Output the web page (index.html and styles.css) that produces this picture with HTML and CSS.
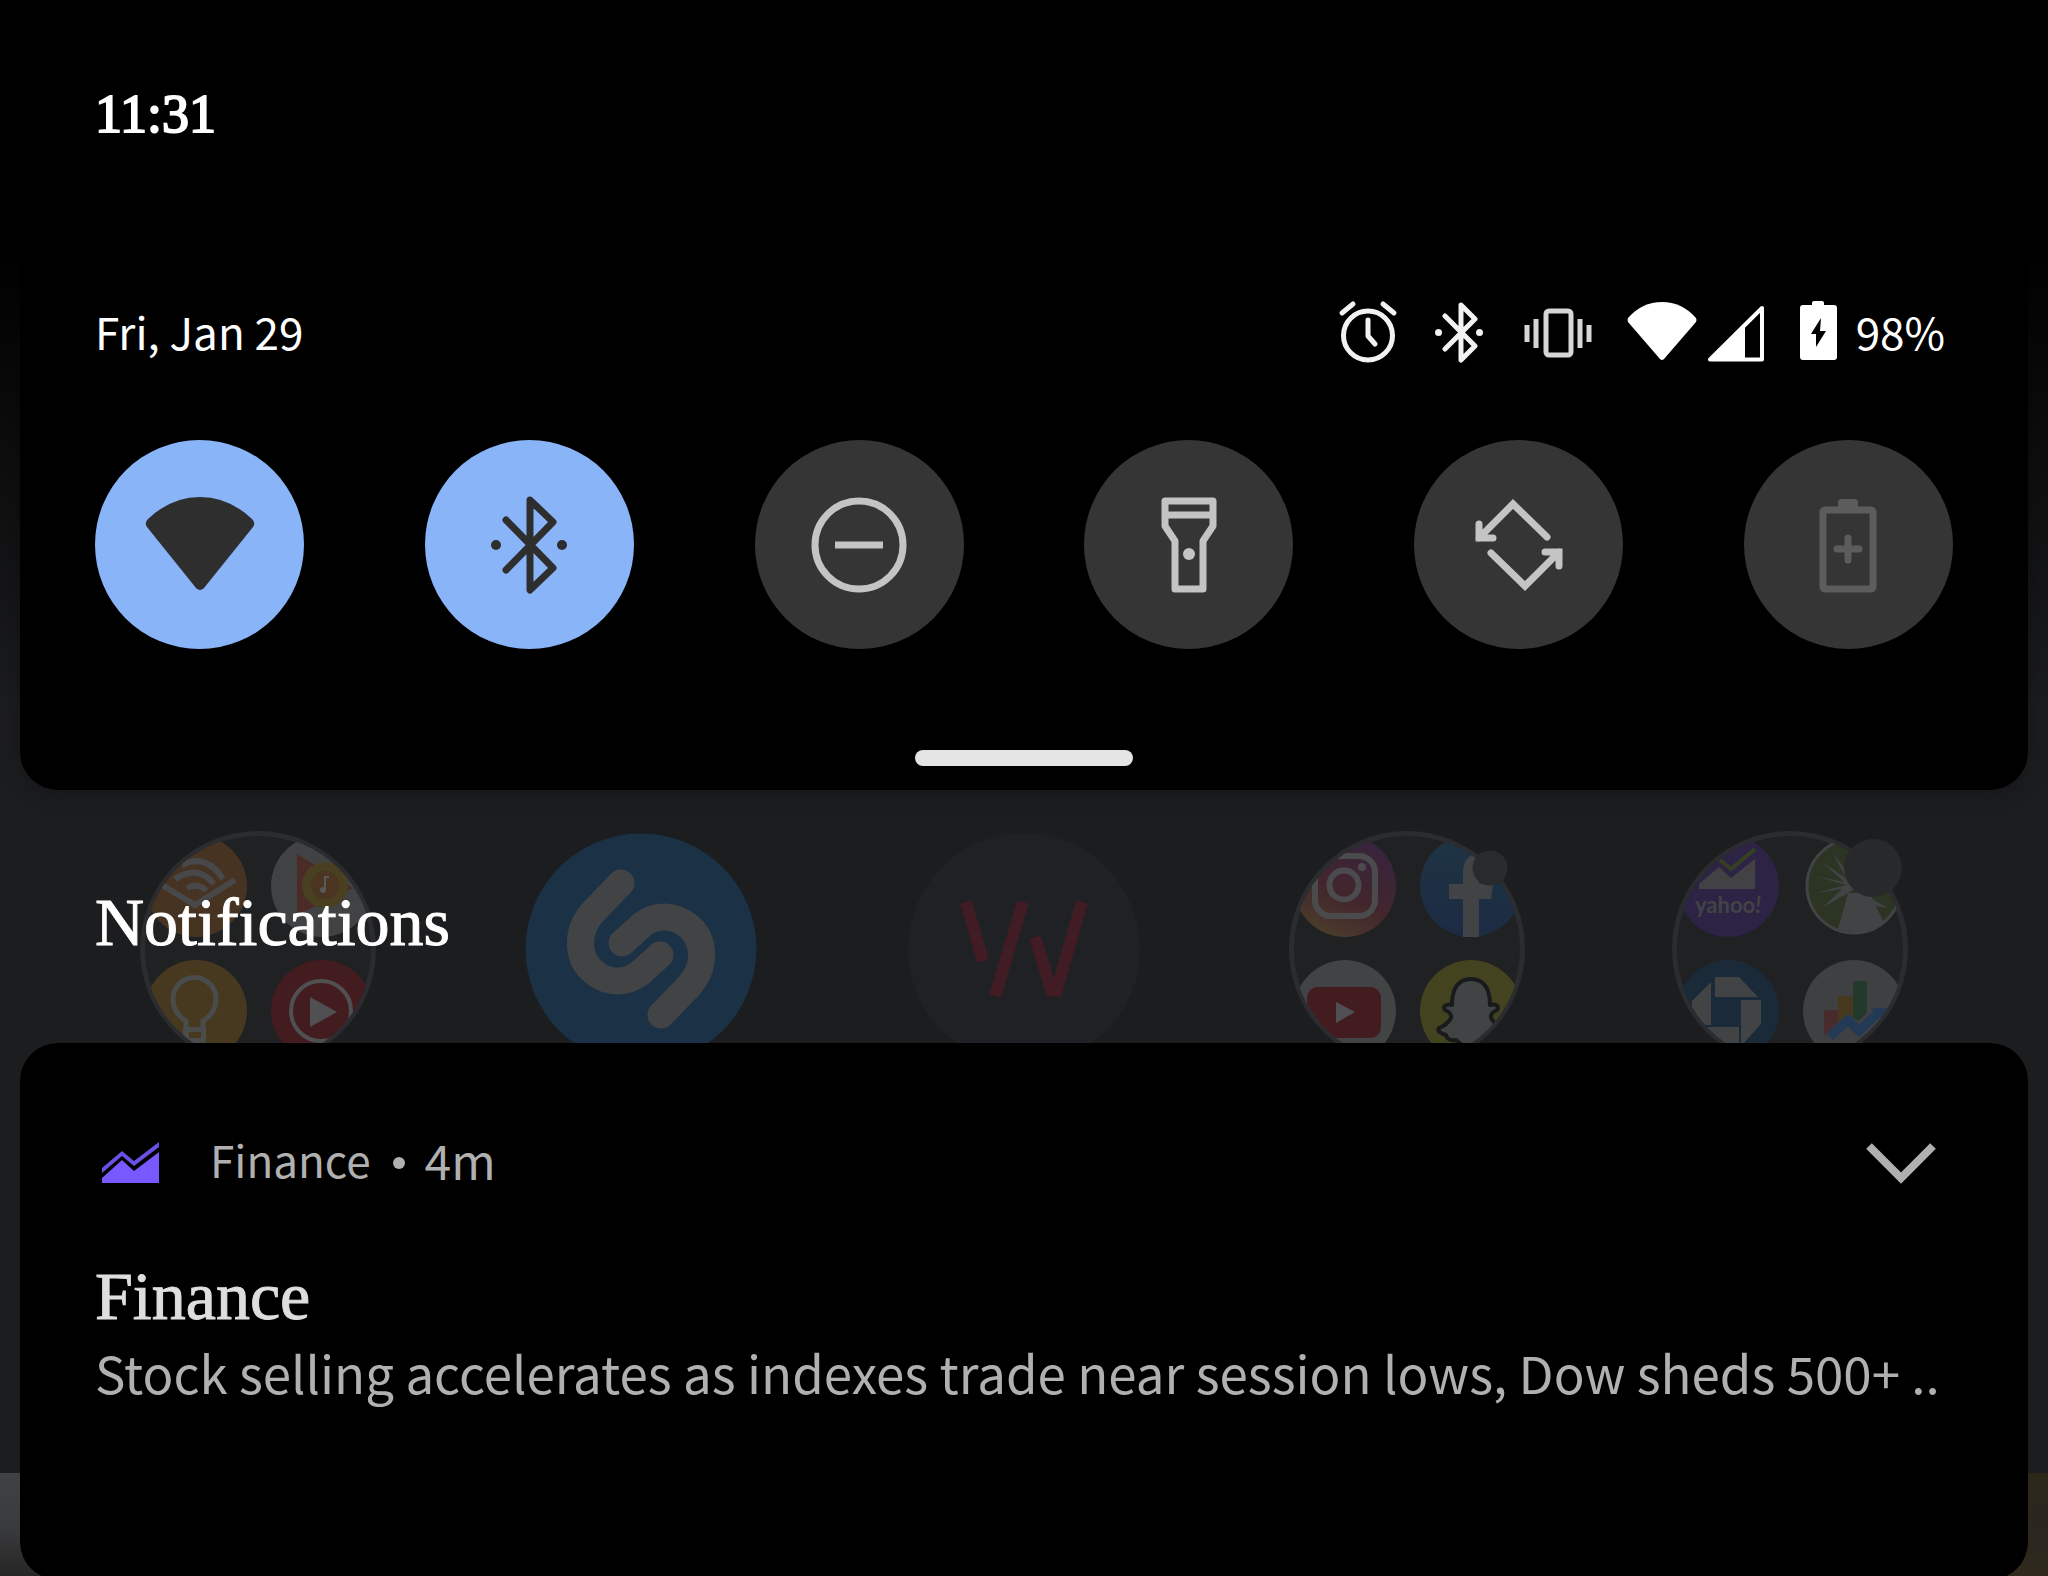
FILE: index.html
```html
<!DOCTYPE html>
<html lang="en">
<head>
    <meta charset="UTF-8">
    <meta name="viewport" content="width=device-width, initial-scale=1.0">
    <title>Notification shade</title>
    <link rel="stylesheet" href="styles.css">
</head>
<body>
    <!-- quick settings -->
    <header class="panel">
        <time class="clock">11:31</time>
        <div class="status">
            <span class="date">Fri, Jan 29</span>
            <div class="status-icons">
                <svg width="60" height="64" viewBox="0 0 60 64" fill="none" stroke="#f2f2f2" stroke-width="5" stroke-linecap="round" stroke-linejoin="round">
                    <circle cx="30" cy="36.500" r="24.500"/>
                    <path d="M4 14L15 5M45 5L56 14M30 21V37L37 45"/>
                </svg>
                <svg width="50" height="64" viewBox="0 0 50 64" fill="none" stroke="#f2f2f2" stroke-width="5" stroke-linejoin="round">
                    <path stroke-linecap="round" d="M12 17L42 47L28 61V6L42 20L12 50"/>
                    <circle cx="5.500" cy="33.500" r="3.500" fill="#f2f2f2" stroke="none"/>
                    <circle cx="46.500" cy="33.500" r="3.500" fill="#f2f2f2" stroke="none"/>
                </svg>
                <svg width="74" height="64" viewBox="0 0 74 64" fill="none" stroke="#d6d6d6" stroke-width="5">
                    <rect x="28" y="12" width="25" height="44" rx="3"/>
                    <path d="M9 26V43M18 20V49M62 20V49M71 26V43"/>
                </svg>
                <span class="signal">
                    <svg width="70" height="64" viewBox="0 0 70 64"><path fill="#fff" d="M1 19Q15 3 35 3T69 19Q70 21 69 23L37 60Q35 62 33 60L1 23Q0 21 1 19Z"/></svg>
                    <svg width="58" height="64" viewBox="0 0 58 64"><path fill="none" stroke="#fff" stroke-width="4" stroke-linejoin="round" d="M3 60.500L55 9V60.500Z"/><path fill="#fff" d="M3 61L38 26V61Z"/></svg>
                </span>
                <span class="battery">
                    <svg width="37" height="64" viewBox="0 0 37 64"><path fill="#fff" d="M12 6V4Q12 2 14 2H22Q24 2 24 4V6H34Q37 6 37 9V58Q37 61 34 61H3Q0 61 0 58V9Q0 6 3 6Z"/><path d="M21 19L11 35H16V48L26 32H20Z"/></svg>
                    <span>98%</span>
                </span>
            </div>
        </div>
        <div class="tiles">
            <button class="tile on" aria-label="Wi-Fi" aria-pressed="true">
                <svg width="120" height="120" viewBox="0 0 120 120"><path fill="#2e2e2e" d="M8 34Q31 12 60 12T112 34Q116 38 113 42L64 103Q60 107 56 103L7 42Q4 38 8 34Z"/></svg>
            </button>
            <button class="tile on" aria-label="Bluetooth" aria-pressed="true">
                <svg width="120" height="120" viewBox="0 0 120 120" fill="none" stroke="#2e2e2e" stroke-width="7" stroke-linecap="round" stroke-linejoin="round">
                    <path d="M37 35L84 83L61 105V15L84 37L37 85"/>
                    <circle cx="27" cy="60" r="5" fill="#2e2e2e" stroke="none"/>
                    <circle cx="93" cy="60" r="5" fill="#2e2e2e" stroke="none"/>
                </svg>
            </button>
            <button class="tile" aria-label="Do not disturb" aria-pressed="false">
                <svg width="120" height="120" viewBox="0 0 120 120" fill="none" stroke="#c4c4c4" stroke-width="7">
                    <circle cx="60" cy="60" r="44"/>
                    <path d="M36 60H84"/>
                </svg>
            </button>
            <button class="tile" aria-label="Flashlight" aria-pressed="false">
                <svg width="120" height="120" viewBox="0 0 120 120" fill="none" stroke="#c4c4c4" stroke-width="7" stroke-linejoin="round">
                    <path d="M36 16H84V41L74 56V104H46V56L36 41ZM36 30H84"/>
                    <circle cx="60" cy="69" r="6" fill="#c4c4c4" stroke="none"/>
                </svg>
            </button>
            <button class="tile" aria-label="Auto-rotate" aria-pressed="false">
                <svg width="120" height="120" viewBox="0 0 120 120" fill="none" stroke="#c4c4c4" stroke-width="7" stroke-linecap="round">
                    <path d="M88 52L54 19L20 53M20 39V53H34"/>
                    <path d="M32 68L66 101L100 67M100 81V67H86"/>
                </svg>
            </button>
            <button class="tile" aria-label="Battery saver" disabled>
                <svg width="120" height="120" viewBox="0 0 120 120" fill="none" stroke="#5c5c5c" stroke-width="7" stroke-linejoin="round">
                    <rect x="35" y="25" width="50" height="79" rx="2"/>
                    <path fill="#5c5c5c" stroke="none" d="M50 23V18Q50 14 54 14H66Q70 14 70 18V23Z"/>
                    <path stroke-linecap="round" d="M49 64H71M60 53V75"/>
                </svg>
            </button>
        </div>
        <div class="handle"></div>
    </header>

    <section class="home">
        <!-- dimmed launcher icons behind the heading -->
        <div class="apps" aria-hidden="true">
            <svg class="app" viewBox="0 0 236 236">
                <defs><clipPath id="folder"><circle cx="118" cy="118" r="114"/></clipPath></defs>
                <circle cx="118" cy="118" r="115.500" fill="#202123" stroke="#2b2c2f" stroke-width="5"/>
                <g clip-path="url(#folder)">
                    <circle cx="56" cy="55" r="51" fill="#463321"/>
                    <g fill="none" stroke="#48484a" stroke-width="6">
                        <path d="M22 54L55 74L95 49"/>
                        <path d="M42 34Q66 22 83 48M35 48Q58 33 74 53M47 57Q59 51 66 60"/>
                    </g>
                    <circle cx="182" cy="55" r="51" fill="#414244"/>
                    <path d="M157 23L213 57L157 84Z" fill="#4b2b27"/>
                    <circle cx="185" cy="54" r="23" fill="#494021"/>
                    <circle cx="185" cy="54" r="14" fill="#4b3520"/>
                    <path d="M185 59V46H189" fill="none" stroke="#58595a" stroke-width="2"/>
                    <circle cx="183" cy="59" r="3" fill="#58595a"/>
                    <circle cx="56" cy="180" r="51" fill="#463920"/>
                    <path d="M46 196V190Q33 182 33 168A21 21 0 0 1 76 168Q76 182 63 190V196" fill="none" stroke="#4a4b4b" stroke-width="5"/>
                    <path d="M43 196H66V220H43Z" fill="#4a4b4b"/>
                    <path d="M49 201H61V207H49Z" fill="#463920"/>
                    <circle cx="182" cy="180" r="51" fill="#431c20"/>
                    <circle cx="181" cy="180" r="30" fill="none" stroke="#505052" stroke-width="4"/>
                    <path d="M170 166L197 181L170 196Z" fill="#505052"/>
                </g>
            </svg>
            <svg class="app" viewBox="0 0 236 236">
                <circle cx="118" cy="118" r="115.500" fill="#1b3146"/>
                <g fill="none" stroke="#424345" stroke-width="27" stroke-linecap="round">
                    <path d="M98 52L70 81C52 101 54 129 72 142C86 153 103 152 116 143L137 124"/>
                    <path d="M138 184L166 155C184 135 182 107 164 94C150 83 133 84 120 93L99 112"/>
                </g>
            </svg>
            <svg class="app" viewBox="0 0 236 236">
                <circle cx="118" cy="118" r="116" fill="#202125"/>
                <g fill="none" stroke="#421c24" stroke-width="12">
                    <path d="M60 71L77 130M117 71L89 165M129 106L147 165"/>
                    <path d="M176 71L149 165"/>
                </g>
            </svg>
            <svg class="app" viewBox="0 0 236 236">
                <defs>
                    <linearGradient id="insta" x1="0.300" y1="1" x2="0.800" y2="0"><stop offset="0" stop-color="#4a3d2b"/><stop offset="0.400" stop-color="#43262c"/><stop offset="1" stop-color="#35233f"/></linearGradient>
                    <linearGradient id="fb" x1="0" y1="0" x2="0" y2="1"><stop offset="0" stop-color="#1e3442"/><stop offset="1" stop-color="#1c2b44"/></linearGradient>
                </defs>
                <circle cx="118" cy="118" r="115.500" fill="#202123" stroke="#2b2c2f" stroke-width="5"/>
                <g clip-path="url(#folder)">
                    <circle cx="56" cy="55" r="51" fill="url(#insta)"/>
                    <rect x="26" y="25" width="60" height="60" rx="16" fill="none" stroke="#4b4a4d" stroke-width="6"/>
                    <circle cx="55" cy="54" r="14.500" fill="none" stroke="#4b4a4d" stroke-width="6"/>
                    <circle cx="73" cy="36" r="4" fill="#4b4a4d"/>
                    <circle cx="182" cy="55" r="51" fill="url(#fb)"/>
                    <path fill="#424345" d="M174 106V68H160V53H174V42Q174 24 190 22H204V36H197Q190 36 190 43V53H204L202 68H190V106Z"/>
                    <circle cx="56" cy="180" r="51" fill="#424345"/>
                    <rect x="18" y="156" width="74" height="51" rx="11" fill="#431c20"/>
                    <path d="M47 171L66 181L47 192Z" fill="#505052"/>
                    <circle cx="182" cy="180" r="51" fill="#43431f"/>
                    <path fill="#424345" stroke="#191a1b" stroke-width="4" stroke-linejoin="round" d="M182 148C169 148 163 158 163 174C157 172 153 176 156 179Q163 182 162 187Q158 194 150 197Q147 201 157 204Q158 210 167 209Q175 217 182 217Q189 217 197 209Q206 210 207 204Q217 201 214 197Q206 194 202 187Q201 182 208 179C211 176 207 172 201 174C201 158 195 148 182 148Z"/>
                </g>
                <circle cx="201" cy="37" r="17.500" fill="#292a2b"/>
            </svg>
            <svg class="app" viewBox="0 0 236 236">
                <circle cx="118" cy="118" r="115.500" fill="#202123" stroke="#2b2c2f" stroke-width="5"/>
                <g clip-path="url(#folder)">
                    <circle cx="56" cy="55" r="51" fill="#2d2344"/>
                    <path fill="#424245" d="M27 58V53L47 36L59 47L83 28V58Z"/>
                    <path fill="none" stroke="#334122" stroke-width="4" d="M48 29L59 38L83 18"/>
                    <text class="yahoo" x="23" y="82">yahoo<tspan font-style="italic">!</tspan></text>
                    <circle cx="182" cy="55" r="47" fill="#2c3424" stroke="#424345" stroke-width="3"/>
                    <path fill="#424345" d="M176 62H198L212 92Q190 106 166 98Z"/>
                    <path fill="#424345" d="M174 54L143 45L172 51L150 31L174 47L160 21L177 43L182 12L183 45V58L150 77L170 58L143 62ZM200 68L216 77L204 75Z"/>
                    <circle cx="56" cy="180" r="51" fill="#1b2a38"/>
                    <path fill="#424345" d="M43 146H67L86 166H43ZM69 169H89V193L71 213H69ZM39 151V194H20V170ZM33 196H67V217H50Z"/>
                    <circle cx="182" cy="180" r="51" fill="#3f4042"/>
                    <path fill="#482c2d" d="M152 181Q152 179 154 179H166V192L152 205Z"/>
                    <path fill="#463920" d="M166 165H181V190L175 184L166 192Z"/>
                    <path fill="#22392c" d="M181 152Q181 150 183 150H193Q195 150 195 152V182L186 190L181 187Z"/>
                    <path fill="none" stroke="#233a57" stroke-width="9" d="M158 206L176 189L187 200L207 181"/>
                    <path fill="#233a57" d="M199 177H214V192Z"/>
                </g>
                <circle cx="201" cy="37" r="29" fill="#28292b"/>
            </svg>
        </div>
        <h1 class="heading">Notifications</h1>
    </section>

    <main class="list">
        <article class="card">
            <div class="card-head">
                <svg class="logo" width="57" height="42" viewBox="0 0 57 42"><path fill="#7759ff" d="M0 41V36L20 18L32 29L57 10V41Z"/><path fill="#6b50e6" d="M0 26V31L20 14L32 24L57 5V0L32 19L20 9Z"/></svg>
                <span class="source">Finance</span>
                <span class="dot"></span>
                <span class="age">4m</span>
                <button class="expand" aria-label="Expand">
                    <svg width="70" height="42" viewBox="0 0 70 42" fill="none" stroke="#b0b0b0" stroke-width="8"><path d="M3 4L35 36L67 4"/></svg>
                </button>
            </div>
            <h2 class="title">Finance</h2>
            <p class="text">Stock selling accelerates as indexes trade near session lows, Dow sheds 500+ ..</p>
        </article>
    </main>
</body>
</html>
```
FILE: styles.css
```css
*{
    padding: 0;
    margin: 0;
    box-sizing: border-box;
}
body{
    min-height: 100vh;
    overflow: hidden;
    background: #1c1d1f linear-gradient(#000 230px, #1c1d1f 720px) no-repeat;
    color: #fff;
    font-family: "Noto Sans CJK SC", "Open Sans", sans-serif;
    font-size: 44px;
    line-height: 64px;
}
svg{
    display: block;
    flex: none;
}
button{
    border: 0;
    background: none;
    cursor: pointer;
}
.panel{
    margin: 0 20px;
    padding: 82px 75px 24px;
    background: #000;
    border-radius: 0 0 38px 38px;
    box-shadow: 0 2px 24px rgba(0, 0, 0, 0.3);
}
.clock{
    display: block;
    font-family: "Liberation Serif", serif;
    font-size: 54px;
    -webkit-text-stroke: 2px;
}
.status{
    display: flex;
    align-items: center;
    justify-content: space-between;
    margin-top: 153px;
    padding-right: 8px;
}
.status-icons{
    display: flex;
    align-items: center;
    gap: 35px;
}
.signal{
    display: flex;
    gap: 10px;
}
.battery{
    display: flex;
    gap: 19px;
}
.tiles{
    display: flex;
    justify-content: space-between;
    margin-top: 77px;
}
.tile{
    display: flex;
    align-items: center;
    justify-content: center;
    width: 209px;
    height: 209px;
    border-radius: 50%;
    background: #353535;
}
.tile.on{
    background: #8ab4f8;
}
.handle{
    width: 218px;
    height: 16px;
    margin: 101px auto 0;
    border-radius: 8px;
    background: #e4e4e4;
}

.home{
    position: relative;
    height: 253px;
    padding: 94px 75px 0;
    margin: 0 20px;
    overflow: hidden;
}
.apps{
    position: absolute;
    top: 41px;
    left: 120px;
    right: 120px;
    display: flex;
    justify-content: space-between;
}
.app{
    width: 236px;
    height: 236px;
}
.yahoo{
    font-family: Lato, sans-serif;
    font-size: 22px;
    font-weight: bold;
    fill: #424345;
}
.heading,
.title{
    position: relative;
    font-family: "Liberation Serif", serif;
    font-size: 68px;
    font-weight: normal;
    line-height: 76px;
    -webkit-text-stroke: 1px;
}

/* the wallpaper shows on both sides of the card */
.list{
    padding: 0 20px;
    background:
        linear-gradient(#404143, #3a3b3d 50%, #242424) left bottom / 40px 107px no-repeat,
        linear-gradient(#2c2819, #2a2620 50%, #302a1c) right bottom / 40px 107px no-repeat;
}
.card{
    height: 537px;
    padding: 84px 75px 0;
    background: #000;
    border-radius: 38px;
}
.card-head{
    display: flex;
    align-items: center;
    color: #b0b0b0;
}
.logo,
.dot,
.expand{
    margin-top: 8px;
}
.logo{
    margin-left: 7px;
}
.source{
    margin-left: 51px;
}
.dot{
    width: 12px;
    height: 12px;
    margin-left: 22px;
    margin-right: 20px;
    border-radius: 50%;
    background: #b0b0b0;
}
.age{
    font-size: 48px;
}
.expand{
    margin-left: auto;
    margin-right: 17px;
}
.title{
    margin-top: 67px;
    color: #dedede;
}
.text{
    color: #b0b0b0;
    font-size: 51px;
    line-height: 76px;
    white-space: nowrap;
}
```
